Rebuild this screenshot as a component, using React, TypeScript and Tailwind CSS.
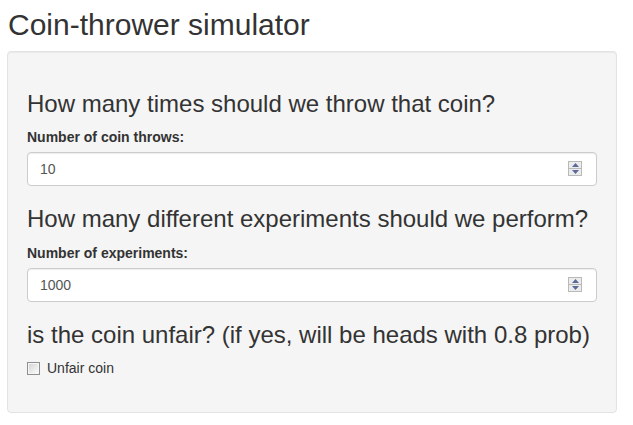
import { useState } from "react";

const FONT = "font-['Liberation_Sans',Arial,sans-serif]";

function Spinner() {
  return (
    <div className="pointer-events-none absolute right-[15px] top-[9px] flex w-[14px] flex-col border border-[#b9b9b9] bg-[#b9b9b9]">
      <div className="flex h-[6px] items-center justify-center bg-[#ececec]">
        <svg width="7" height="4" viewBox="0 0 7 4">
          <path d="M0 4 L3.5 0 L7 4 Z" fill="#5b6a98" />
        </svg>
      </div>
      <div className="mt-px flex h-[6px] items-center justify-center bg-[#ececec]">
        <svg width="7" height="4" viewBox="0 0 7 4">
          <path d="M0 0 L3.5 4 L7 0 Z" fill="#5b6a98" />
        </svg>
      </div>
    </div>
  );
}

function NumberField({
  heading,
  label,
  value,
  onChange,
}: {
  heading: string;
  label: string;
  value: string;
  onChange: (v: string) => void;
}) {
  return (
    <div className="flex flex-col">
      <h3 className="mt-[20px] mb-[10px] text-[24px] font-normal leading-[26.4px]">
        {heading}
      </h3>
      <label className="mb-[5px] text-[14px] font-bold leading-[20px]">{label}</label>
      <div className="relative">
        <input
          type="text"
          value={value}
          onChange={(e) => onChange(e.target.value)}
          className="block h-[34px] w-full rounded-[4px] border border-[#cccccc] bg-white px-[12px] text-[14px] text-[#555555] shadow-[inset_0_1px_1px_rgba(0,0,0,0.075)] outline-none"
        />
        <Spinner />
      </div>
    </div>
  );
}

export default function App() {
  const [throws, setThrows] = useState("10");
  const [experiments, setExperiments] = useState("1000");
  const [unfair, setUnfair] = useState(false);

  return (
    <div className={`${FONT} min-h-[425px] bg-white px-[7px] pt-[8px] text-[#333333]`}>
      <h2 className="ml-px mb-[10px] text-[30px] font-normal leading-[33px]">
        Coin-thrower simulator
      </h2>

      {/* sidebar panel */}
      <div className="flex w-[610px] flex-col rounded-[4px] border border-[#e3e3e3] bg-[#f5f5f5] px-[19px] pt-[19px] pb-[34px] shadow-[inset_0_1px_1px_rgba(0,0,0,0.05)]">
        <NumberField
          heading="How many times should we throw that coin?"
          label="Number of coin throws:"
          value={throws}
          onChange={setThrows}
        />
        <NumberField
          heading="How many different experiments should we perform?"
          label="Number of experiments:"
          value={experiments}
          onChange={setExperiments}
        />

        <h3 className="mt-[20px] mb-[10px] text-[24px] font-normal leading-[26.4px]">
          is the coin unfair? (if yes, will be heads with 0.8 prob)
        </h3>
        <label
          className="flex cursor-pointer items-start text-[14px] leading-[20px]"
          onClick={() => setUnfair(!unfair)}
        >
          <span className="mt-[4px] flex h-[13px] w-[13px] items-center justify-center border border-[#8f8f8f] bg-[#f4f4f4]">
            <span className="block h-[11px] w-[11px] border border-[#f6f6f6] bg-gradient-to-br from-[#d6d6d6] to-[#fafafa] text-center text-[9px] leading-[9px] text-[#333]">
              {unfair ? "✓" : ""}
            </span>
          </span>
          <span className="ml-[7px]">Unfair coin</span>
        </label>
      </div>
    </div>
  );
}
